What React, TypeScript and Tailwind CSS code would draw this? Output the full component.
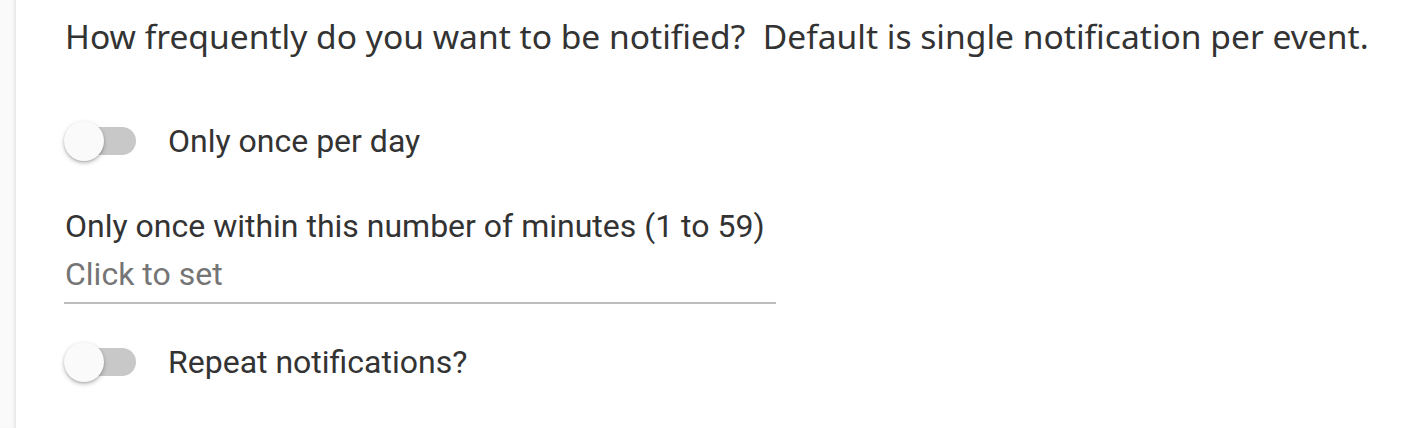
import React from "react";

function Toggle() {
  return (
    <div className="relative w-[72px] h-[40px] flex items-center">
      <div className="absolute left-[4px] right-0 h-[28px] rounded-full bg-[#c8c8c8]" />
      <div className="absolute left-0 top-0 w-[40px] h-[40px] rounded-full bg-[#fafafa] shadow-[0_2px_4px_rgba(0,0,0,0.25),0_1px_2px_rgba(0,0,0,0.12)]" />
    </div>
  );
}

export default function App() {
  return (
    <div className="flex w-[1424px] h-[428px] bg-white">
      <div className="w-[16px] h-full bg-[#fafafa] shadow-[inset_-3px_0_3px_-1px_rgba(0,0,0,0.08)]" />
      <div className="flex flex-col pl-[48px] pt-[14px] font-['Roboto',sans-serif] text-[#333]">
        <div className="ml-px font-['Noto_Sans',Arial,sans-serif] text-[33.6px] leading-[44px] whitespace-pre text-[#333]">
          {"How frequently do you want to be notified?  Default is single notification per event."}
        </div>
        <div className="flex items-center mt-[63px] h-[40px]">
          <Toggle />
          <span className="ml-[32px] text-[32px] leading-[40px] text-[#333]">Only once per day</span>
        </div>
        <div className="ml-px mt-[45px] text-[32px] leading-[40px] text-[#333]">Only once within this number of minutes (1 to 59)</div>
        <div className="w-[712px] border-b-2 border-[#bdbdbd] h-[58px] flex items-center">
          <span className="ml-px text-[32px] text-[#757575] leading-[40px]">Click to set</span>
        </div>
        <div className="flex items-center mt-[38px] h-[40px]">
          <Toggle />
          <span className="ml-[32px] text-[32px] leading-[40px] text-[#333]">Repeat notifications?</span>
        </div>
      </div>
    </div>
  );
}
